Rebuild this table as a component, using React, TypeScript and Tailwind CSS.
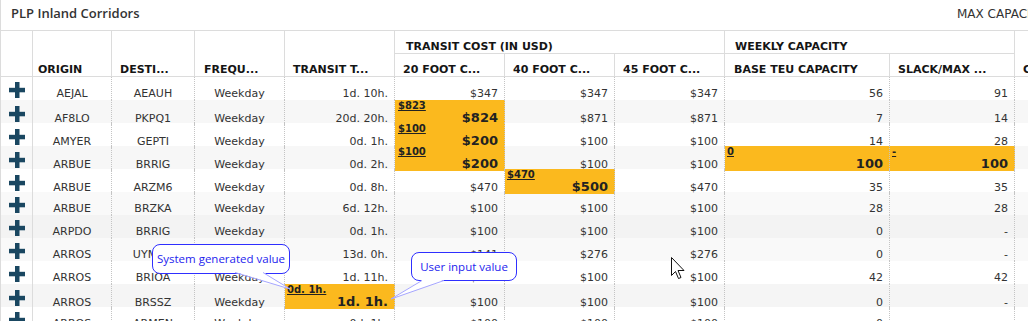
import React from "react";

type Flagged = { sys: string; val: string };
type Cell = string | Flagged;

type Row = {
  origin: string;
  dest: string;
  freq: string;
  transit: Cell;
  c20: Cell;
  c40: Cell;
  c45: Cell;
  base: Cell;
  slack: Cell;
  bg: string;
};

const COLS =
  "grid w-max grid-cols-[32px_79px_83px_90px_110px_110px_110px_110px_165px_125px_120px]";

const rows: Row[] = [
  { origin: "AEJAL", dest: "AEAUH", freq: "Weekday", transit: "1d. 10h.", c20: "$347", c40: "$347", c45: "$347", base: "56", slack: "91", bg: "bg-white" },
  { origin: "AF8LO", dest: "PKPQ1", freq: "Weekday", transit: "20d. 20h.", c20: { sys: "$823", val: "$824" }, c40: "$871", c45: "$871", base: "7", slack: "14", bg: "bg-[#f7f7f7]" },
  { origin: "AMYER", dest: "GEPTI", freq: "Weekday", transit: "0d. 1h.", c20: { sys: "$100", val: "$200" }, c40: "$100", c45: "$100", base: "14", slack: "28", bg: "bg-white" },
  { origin: "ARBUE", dest: "BRRIG", freq: "Weekday", transit: "0d. 2h.", c20: { sys: "$100", val: "$200" }, c40: "$100", c45: "$100", base: { sys: "0", val: "100" }, slack: { sys: "-", val: "100" }, bg: "bg-[#f7f7f7]" },
  { origin: "ARBUE", dest: "ARZM6", freq: "Weekday", transit: "0d. 8h.", c20: "$470", c40: { sys: "$470", val: "$500" }, c45: "$470", base: "35", slack: "35", bg: "bg-white" },
  { origin: "ARBUE", dest: "BRZKA", freq: "Weekday", transit: "6d. 12h.", c20: "$100", c40: "$100", c45: "$100", base: "28", slack: "28", bg: "bg-[#f9f9f9]" },
  { origin: "ARPDO", dest: "BRRIG", freq: "Weekday", transit: "0d. 1h.", c20: "$100", c40: "$100", c45: "$100", base: "0", slack: "-", bg: "bg-[#f3f3f3]" },
  { origin: "ARROS", dest: "UYMVD", freq: "Weekday", transit: "13d. 0h.", c20: "$141", c40: "$276", c45: "$276", base: "0", slack: "-", bg: "bg-[#f9f9f9]" },
  { origin: "ARROS", dest: "BRIOA", freq: "Weekday", transit: "1d. 11h.", c20: "$100", c40: "$100", c45: "$100", base: "42", slack: "42", bg: "bg-white" },
  { origin: "ARROS", dest: "BRSSZ", freq: "Weekday", transit: { sys: "0d. 1h.", val: "1d. 1h." }, c20: "$100", c40: "$100", c45: "$100", base: "0", slack: "-", bg: "bg-[#f5f5f5]" },
  { origin: "ARROS", dest: "ARMEN", freq: "Weekday", transit: "0d. 1h.", c20: "$100", c40: "$100", c45: "$100", base: "0", slack: "", bg: "bg-white" },
];

const PlusIcon = () => (
  <svg width="16" height="16" viewBox="0 0 16 16" className="block">
    <rect x="6" y="0" width="4.5" height="16" fill="#1a4761" />
    <rect x="0" y="5.8" width="16" height="4.5" fill="#1a4761" />
  </svg>
);

const HeadCell = ({ label, className = "" }: { label?: string; className?: string }) => (
  <div
    className={`flex items-end overflow-hidden whitespace-nowrap border-r border-b border-[#dcdcdc] pl-2 text-[11px] font-bold leading-[13px] text-[#151515] ${className}`}
  >
    {label}
  </div>
);

const Center = ({ text }: { text: string }) => (
  <div className="flex items-end justify-center border-r border-dotted border-[#c4c4c4] leading-[13px]">
    {text}
  </div>
);

const Num = ({ v, smallPad = "pl-1" }: { v: Cell; smallPad?: string }) => {
  if (typeof v === "string") {
    return (
      <div className="flex items-end justify-end border-r border-dotted border-[#c4c4c4] pr-[6px] leading-[13px]">
        {v}
      </div>
    );
  }
  return (
    <div
      className={`flex flex-col justify-between border-r border-dotted border-[#c4c4c4] bg-[#fbb91e] pr-[6px] ${smallPad} text-[#222]`}
    >
      <span className="self-start pt-px text-[10px] font-bold leading-[10px] underline">{v.sys}</span>
      <span className="self-end pb-px text-[13px] font-bold leading-[13px]">{v.val}</span>
    </div>
  );
};

const Bubble = ({ text, className }: { text: string; className: string }) => (
  <div
    className={`absolute flex items-center justify-center rounded-[8px] border border-[#2f2fff] bg-white font-['Open_Sans',sans-serif] text-[11.5px] text-[#2424ee] ${className}`}
  >
    {text}
  </div>
);

export default function App() {
  return (
    <div className="relative h-[321px] w-[1028px] overflow-hidden border-l border-[#dcdcdc] bg-white font-['DejaVu_Sans',sans-serif] text-[11px] text-[#333]">
      {/* Title bar */}
      <div className="flex h-[30px] w-max items-start">
        <div className="w-[956px] pl-[10px] pt-[4px] font-['Open_Sans',sans-serif] text-[13px] font-semibold leading-[18px] text-[#333]">
          PLP Inland Corridors
        </div>
        <div className="whitespace-nowrap pt-[7px] text-[12px] leading-[14px] text-[#333]">MAX CAPACITY</div>
      </div>

      {/* Header */}
      <div className={`${COLS} grid-rows-[23px_23px] border-t border-[#dcdcdc]`}>
        <HeadCell className="row-span-2" />
        <HeadCell className="row-span-2 !pl-[5px]" label="ORIGIN" />
        <HeadCell className="row-span-2" label="DESTI..." />
        <HeadCell className="row-span-2 !pl-[9px]" label="FREQU..." />
        <HeadCell className="row-span-2" label="TRANSIT T..." />
        <HeadCell className="col-span-3 !pl-[11px]" label="TRANSIT COST (IN USD)" />
        <HeadCell className="col-span-2 !pl-[10px]" label="WEEKLY CAPACITY" />
        <HeadCell className="row-span-2" label="COMMENTS" />
        <HeadCell label="20 FOOT C..." />
        <HeadCell label="40 FOOT C..." />
        <HeadCell label="45 FOOT C..." />
        <HeadCell className="!pl-[9px]" label="BASE TEU CAPACITY" />
        <HeadCell label="SLACK/MAX ..." />
      </div>

      {/* Body */}
      {rows.map((r, i) => (
        <div key={i} className={`${COLS} h-[23px] ${r.bg}`}>
          <div className="flex items-center justify-center border-r border-[#dcdcdc] pt-[3px]">
            <PlusIcon />
          </div>
          <Center text={r.origin} />
          <Center text={r.dest} />
          <Center text={r.freq} />
          <Num v={r.transit} smallPad="pl-[2px]" />
          <Num v={r.c20} smallPad="pl-[3px]" />
          <Num v={r.c40} smallPad="pl-[2px]" />
          <Num v={r.c45} />
          <Num v={r.base} smallPad="pl-[2px]" />
          <Num v={r.slack} smallPad="pl-[2px]" />
          <div className="border-r border-dotted border-[#c4c4c4]" />
        </div>
      ))}

      {/* Callouts */}
      <Bubble text="System generated value" className="left-[151px] top-[244px] h-[30px] w-[138px]" />
      <Bubble text="User input value" className="left-[410px] top-[252px] h-[29px] w-[106px]" />
      <svg className="pointer-events-none absolute left-0 top-0" width="1028" height="321">
        <polygon points="234,272 262,272 289,289" fill="white" />
        <line x1="234" y1="272.5" x2="289" y2="289" stroke="#a6a6ff" strokeWidth="1" />
        <line x1="262" y1="272.5" x2="289" y2="289" stroke="#a6a6ff" strokeWidth="1" />
        <polygon points="421,280 443,280 390,299" fill="white" />
        <line x1="421" y1="280.5" x2="390" y2="299" stroke="#a6a6ff" strokeWidth="1" />
        <line x1="443" y1="280.5" x2="390" y2="299" stroke="#a6a6ff" strokeWidth="1" />
        {/* mouse pointer */}
        <path
          d="M670.5 257.5 L670.5 275.5 L674.5 271.5 L677.5 278.5 L680 277.5 L677 270.5 L683 270.5 Z"
          fill="white"
          stroke="#111"
          strokeWidth="1"
          strokeLinejoin="miter"
        />
      </svg>
    </div>
  );
}
